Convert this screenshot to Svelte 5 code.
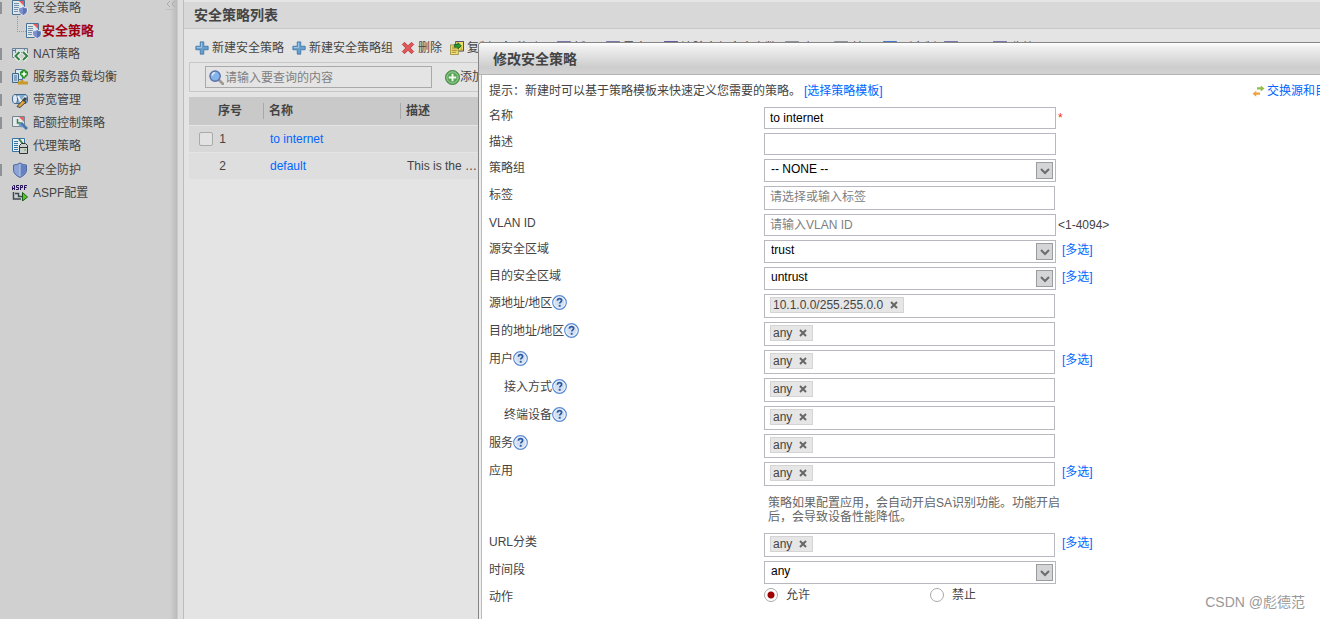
<script>
  let keyword = $state('')
  let action = $state('permit')

  const menu = [
    { name: 'NAT策略', icon: 'nat', marker: true },
    { name: '服务器负载均衡', icon: 'server', marker: true },
    { name: '带宽管理', icon: 'bandwidth', marker: true },
    { name: '配额控制策略', icon: 'quota', marker: true },
    { name: '代理策略', icon: 'proxy', tall: true },
    { name: '安全防护', icon: 'shield', marker: true },
    { name: 'ASPF配置', icon: 'aspf', tall: true }
  ]

  const tools = [
    { name: '新建安全策略', icon: 'plus' },
    { name: '新建安全策略组', icon: 'plus' },
    { name: '删除', icon: 'delete' },
    { name: '复制', icon: 'copy' },
    { name: '移动', icon: 'move', dropdown: true },
    { name: '插入', icon: 'window' },
    { name: '导出', icon: 'window', dropdown: true },
    { name: '清除全部命中次数', icon: 'clear' },
    { name: '启用', icon: 'page' },
    { name: '禁用', icon: 'page' },
    { name: '列定制', icon: 'columns' },
    { name: '展开', icon: 'window' },
    { name: '收缩', icon: 'window' }
  ]

  const policies = [
    { id: 1, name: 'to internet', desc: '', editable: true },
    { id: 2, name: 'default', desc: 'This is the …', editable: false }
  ]

  let fields = $state([
    { id: 'name', label: '名称', type: 'text', value: 'to internet', required: true },
    { id: 'desc', label: '描述', type: 'text', value: '' },
    { id: 'group', label: '策略组', type: 'select', value: '-- NONE --' },
    { id: 'label', label: '标签', type: 'picker', value: '', placeholder: '请选择或输入标签' },
    { id: 'vlan', label: 'VLAN ID', type: 'text', value: '', placeholder: '请输入VLAN ID', range: '<1-4094>' },
    { id: 'src-zone', label: '源安全区域', type: 'select', value: 'trust', multi: true },
    { id: 'dst-zone', label: '目的安全区域', type: 'select', value: 'untrust', multi: true },
    { id: 'src-addr', label: '源地址/地区', type: 'tags', tags: ['10.1.0.0/255.255.0.0'], help: true },
    { id: 'dst-addr', label: '目的地址/地区', type: 'tags', tags: ['any'], help: true },
    { id: 'user', label: '用户', type: 'tags', tags: ['any'], help: true, multi: true },
    { id: 'access', label: '接入方式', type: 'tags', tags: ['any'], help: true, sub: true },
    { id: 'device', label: '终端设备', type: 'tags', tags: ['any'], help: true, sub: true },
    { id: 'service', label: '服务', type: 'tags', tags: ['any'], help: true },
    {
      id: 'app', label: '应用', type: 'tags', tags: ['any'], multi: true,
      note: '策略如果配置应用，会自动开启SA识别功能。功能开启后，会导致设备性能降低。'
    },
    { id: 'url', label: 'URL分类', type: 'tags', tags: ['any'], multi: true },
    { id: 'time', label: '时间段', type: 'select', value: 'any' }
  ])

  const removeTag = (field, tag) => {
    field.tags = field.tags.filter(t => t !== tag)
  }
</script>

{#snippet icon(name)}
  <svg class="icon" viewBox="0 0 16 16" aria-hidden="true">
    {#if name === 'policy'}
      <path d="M.5.5h12v14H.5z" fill="#e2e8ea" stroke="#4a7294" />
      <path d="M2 3.500h5M2 5.500h5M2 7.500h5M2 9.500h4M2 11.500h4" stroke="#6f91ad" />
      <path d="M7 1h5v5z" fill="#ea5a5c" />
      <path d="M6.500 8q2.500 0 4.500-1.500 2 1.500 4.500 1.500v3q0 2.500-4.500 4.500-4.500-2-4.500-4.500z" fill="#7c90cb" stroke="#e1e6f1" />
      <path d="M11 7.500V15q3.500-1.500 3.500-4V8.500Q12.500 8.500 11 7.500z" fill="#5d74b4" />
    {:else if name === 'nat'}
      <path d="M.5 2.500h3v9h-3zM12.500 2.500h3v5h-3zM3.500 2.500h9v4h-9z" fill="#d3dfe6" stroke="#6b8193" />
      <path d="M2 4v1" stroke="#3a70a8" stroke-width="2" />
      <path d="M8 5.500L3.500 10 8 14.500M11 5.500l4 4.500-4 4.500" fill="none" stroke="#f0f5ed" stroke-width="4" />
      <path d="M7.500 6l-4 4 4 4M11 6l4 4-4 4" fill="none" stroke="#388044" stroke-width="2" />
    {:else if name === 'server'}
      <path d="M3.500.5h7v10h-7z" fill="#dce6ef" stroke="#4b7196" />
      <path d="M.5 4.500h6v9h-6z" fill="#c4d6e6" stroke="#3f688d" />
      <path d="M2 7h3M2 9h3M2 11h3" stroke="#4b7196" />
      <path d="M10 11v3M6 14h10" stroke="#c9992c" stroke-width="3" />
      <path d="M12 0l4 3v3l-4 4-4-4V3z" fill="#269323" />
      <path d="M12 2.500v5M9.500 5h5" stroke="#fff" stroke-width="1.500" />
    {:else if name === 'bandwidth'}
      <path d="M3 2.500h10q2.500 0 2.500 4.500T13 11.500H3z" fill="#84abcd" stroke="#3e678e" />
      <ellipse cx="3" cy="7" rx="2.500" ry="4.500" fill="#dfeaf2" stroke="#3e678e" />
      <path d="M6 4l3 6 5-6" fill="none" stroke="#eaf5fc" stroke-width="2" />
      <path d="M5 14.500L11 8l3 2-6 5.500z" fill="#e6a53a" stroke="#414449" />
      <path d="M11 9l3-3" stroke="#414449" stroke-width="3" />
    {:else if name === 'quota'}
      <path d="M.5 1.500h12v10H.5z" fill="#e6e9e7" stroke="#738591" />
      <path d="M7 2h5v5z" fill="#ef5f5f" />
      <path d="M5.500 4v4h4" fill="none" stroke="#328255" stroke-width="1.500" />
      <path d="M9 8l6 6" stroke="#4a78ad" stroke-width="3" />
      <path d="M7.500 8.500q0 3 3 3" fill="none" stroke="#709acb" stroke-width="2" />
    {:else if name === 'proxy'}
      <path d="M.5.5h12v13H.5z" fill="#e6eef4" stroke="#3973a4" />
      <path d="M2 3.500h4M2 5.500h4M2 7.500h4M2 9.500h4M2 11.500h4" stroke="#3973a4" />
      <path d="M7 1l4 5" stroke="#43803e" stroke-width="2" />
      <path d="M9.500 5.500h4l2 2v8h-8v-8z" fill="#c9ceca" stroke="#303537" />
      <path d="M8 9.500h7" stroke="#303537" />
      <path d="M12 12h2" stroke="#5caf50" />
    {:else if name === 'shield'}
      <path d="M1.500 3Q5 3 8 1q3 2 6.500 2v5q0 4.500-6.500 7.500Q1.500 12.500 1.500 8z" fill="#8ca3d8" stroke="#50699f" />
      <path d="M8 2v12.500Q14 12 14 8V3.500Q11 3 8 2z" fill="#6581c1" />
      <path d="M8 2v12" stroke="#c0ccec" />
    {:else if name === 'aspf'}
      <path d="M.5 5V1.500L1.500.5h1v4.500M.5 3.500h2M7 .5H4.500v2h2v2H4M8.500 5V.5h2v2h-2M12.500 5V.5H15M12.500 2.500h2" fill="none" stroke="#27105b" />
      <path d="M1.500 7v7H9M3 8.500h3.500v3H10" fill="none" stroke="#3b4a52" stroke-width="1.500" />
      <path d="M10.500 7.500l5 4.500-5 4z" fill="#53c920" stroke="#1c5c1a" />
    {:else if name === 'plus'}
      <path d="M6 1h4v5h5v4h-5v5H6v-5H1V6h5z" fill="#6a9ecb" stroke="#3f77a8" />
      <path d="M7.500 2v5.500H2" fill="none" stroke="#a6cbea" />
    {:else if name === 'delete'}
      <path d="M4 1.500l4 4 4-4L14.500 4l-4 4 4 4-2.500 2.500-4-4-4 4L1.500 12l4-4-4-4z" fill="#e1575a" stroke="#b73740" />
    {:else if name === 'copy'}
      <path d="M6.500.5h9v11h-9z" fill="#f0dc66" stroke="#35345c" />
      <path d="M.5 4.500h9v11h-9z" fill="#f5e27b" stroke="#968b3b" />
      <path d="M2 7h5M2 9h6M2 11h6M2 13h5M12 8h2M12 10h2" stroke="#a08a28" />
      <path d="M5 4h4V2l4 3.500L9 9V7H5z" fill="#2d9b36" stroke="#176021" />
    {:else if name === 'move'}
      <path d="M8 0l6 6h-3v9H5V6H2z" fill="#65a5dc" stroke="#3e75a8" />
    {:else if name === 'window'}
      <path d="M.5.5h15v13H.5z" fill="#e3e5f2" stroke="#625f99" />
      <path d="M2 4h12M4 7h8M4 10h8" stroke="#8a88b4" />
    {:else if name === 'clear'}
      <path d="M.5.5h15v13H.5z" fill="#6f6cad" stroke="#534e92" />
      <path d="M4 8h8" stroke="#fff" stroke-width="2" />
    {:else if name === 'page'}
      <path d="M.5.5h15v14H.5z" fill="#edf0f2" stroke="#778189" />
      <path d="M9 1h6v6z" fill="#ed5a60" />
    {:else if name === 'columns'}
      <path d="M.5.5h15v13H.5z" fill="#a8c5ef" stroke="#396fc1" />
      <path d="M1 1.500h14M5.500 2v11M10.500 2v11" stroke="#396fc1" stroke-width="2" />
    {:else if name === 'search'}
      <path d="M10 10l5 5" stroke="#a09a95" stroke-width="3" stroke-linecap="round" />
      <circle cx="6.500" cy="6.500" r="5.500" fill="#84b5ea" stroke="#586fa9" stroke-width="1.500" />
      <path d="M3.500 6q0-3 3-3" fill="none" stroke="#d8ebff" stroke-width="1.500" />
    {:else if name === 'add'}
      <circle cx="8" cy="8" r="7.500" fill="#5aa558" stroke="#3c833c" />
      <circle cx="8" cy="8" r="6" fill="none" stroke="#a3cf9f" />
      <path d="M8 4v8M4 8h8" stroke="#f3faf2" stroke-width="2" />
    {:else if name === 'swap'}
      <path d="M6 3h5V.5l5 4-5 4V6H6z" fill="#8fbf47" />
      <path d="M10 10H5V7.500l-5 4 5 4V13h5z" fill="#f0a23c" />
    {:else if name === 'help'}
      <circle cx="8" cy="8" r="7.200" fill="#d3e0f2" stroke="#5b8bd4" stroke-width="1.400" />
      <circle cx="8" cy="8" r="6" fill="none" stroke="#f5f8fc" />
      <path d="M5.800 6q0-2.200 2.300-2.200 2.200 0 2.200 1.900 0 1.300-1.200 1.900-.9.500-.9 1.500" fill="none" stroke="#2d5a9f" stroke-width="1.800" />
      <path d="M7.200 10.500h2v2h-2z" fill="#2d5a9f" />
    {/if}
  </svg>
{/snippet}

<div class="shell">
  <nav class="sidebar">
    <button class="collapse" aria-label="collapse">
      <svg viewBox="0 0 10 8"><path d="M4 0L1 3l3 3M9 0L6 3l3 3" fill="none" stroke="#aaa" /></svg>
    </button>
    <ul>
      <li class="marker"><a href="#policy">{@render icon('policy')}安全策略</a></li>
      <li class="child"><a href="#policy-list">{@render icon('policy')}安全策略</a></li>
      {#each menu as item (item.name)}
        <li class:marker={item.marker} class:tall={item.tall}>
          <a href="#{item.icon}">{@render icon(item.icon)}{item.name}</a>
        </li>
      {/each}
    </ul>
  </nav>

  <main>
    <h1>安全策略列表</h1>
    <div class="toolbar">
      {#each tools as tool}
        <button class:dropdown={tool.dropdown}>{@render icon(tool.icon)}{tool.name}</button>
      {/each}
    </div>
    <div class="filter">
      <div class="search">
        {@render icon('search')}
        <input type="text" aria-label="查询" placeholder="请输入要查询的内容" bind:value={keyword} />
      </div>
      <button>{@render icon('add')}添加查询项</button>
    </div>
    <table>
      <thead>
        <tr><th class="num">序号</th><th class="name"><span>名称</span></th><th><span>描述</span></th></tr>
      </thead>
      <tbody>
        {#each policies as policy (policy.id)}
          <tr>
            <td>
              <div class="num-cell">
                {#if policy.editable}<input type="checkbox" aria-label={policy.name} />{/if}
                {policy.id}
              </div>
            </td>
            <td><a href="#{policy.name}">{policy.name}</a></td>
            <td>{policy.desc}</td>
          </tr>
        {/each}
      </tbody>
    </table>
  </main>

  <section class="dialog" role="dialog" aria-labelledby="dialog-title">
    <h2 id="dialog-title">修改安全策略</h2>
    <div class="dialog-body">
      <div class="tip">
        <span>提示：新建时可以基于策略模板来快速定义您需要的策略。</span>
        <a href="#template">[选择策略模板]</a>
        <a class="swap" href="#swap">{@render icon('swap')}交换源和目的</a>
      </div>
      <form>
        {#each fields as field (field.id)}
          <div class="row">
            <div class="label" class:sub={field.sub}>
              <label for={field.id}>{field.label}</label>
              {#if field.help}
                <button type="button" class="help" aria-label="help">{@render icon('help')}</button>
              {/if}
            </div>
            <div class="control">
              {#if field.type === 'select'}
                <div class="select">
                  <select id={field.id} bind:value={field.value}>
                    <option>{field.value}</option>
                  </select>
                  <span class="arrow">
                    <svg viewBox="0 0 15 15"><path d="M4 6l4 4 4-4" fill="none" stroke="#6a6c70" stroke-width="2" /></svg>
                  </span>
                </div>
              {:else if field.type === 'tags'}
                <div class="tags">
                  {#each field.tags as tag (tag)}
                    <span class="tag">
                      {tag}
                      <button type="button" aria-label="remove {tag}" onclick={() => removeTag(field, tag)}>
                        <svg viewBox="0 0 8 8"><path d="M1 1l6 6M7 1L1 7" stroke="#666" stroke-width="2" /></svg>
                      </button>
                    </span>
                  {/each}
                  <input id={field.id} type="text" />
                </div>
              {:else}
                <input
                  id={field.id}
                  class={field.type}
                  type="text"
                  placeholder={field.placeholder}
                  bind:value={field.value}
                />
              {/if}
              {#if field.note}<p>{field.note}</p>{/if}
            </div>
            {#if field.required}<span class="star">*</span>{/if}
            {#if field.range}<span class="range">{field.range}</span>{/if}
            {#if field.multi}<a class="multi" href="#{field.id}">[多选]</a>{/if}
          </div>
        {/each}
        <div class="row">
          <div class="label">动作</div>
          <div class="radios">
            <label><input type="radio" name="action" value="permit" bind:group={action} />允许</label>
            <label><input type="radio" name="action" value="deny" bind:group={action} />禁止</label>
          </div>
        </div>
      </form>
    </div>
  </section>

  <div class="watermark">CSDN @彪德范</div>
</div>

<style>
  :global(body) {
    color: #444;
    font: 12px/16px "Liberation Sans", "Noto Sans CJK SC", sans-serif;
  }

  .shell {
    position: relative;
    display: flex;
    height: 100vh;
    overflow: hidden;
    background: #e4e4e4;
  }

  * {
    box-sizing: border-box;
  }

  a {
    color: #0066ff;
    text-decoration: none;
  }

  button {
    display: flex;
    align-items: center;
    padding: 0;
    border: none;
    background: none;
    color: inherit;
    font: inherit;
    white-space: nowrap;
    cursor: pointer;
  }

  input,
  select {
    margin: 0;
    font: inherit;
    outline: none;
  }

  .icon {
    flex: none;
    width: 14px;
    height: 14px;
  }

  /* sidebar */
  .sidebar {
    position: relative;
    flex: 0 0 184px;
    border-right: 1px solid #bdbdbd;
    background: linear-gradient(to right, #d0d0d0 170px, #bababa 177px, #dedede 178px);
  }

  .sidebar ul {
    margin: -4px 0 0;
    padding: 0;
    list-style: none;
  }

  .sidebar li {
    display: flex;
    align-items: center;
    height: 23px;
    padding-left: 12px;
  }

  .sidebar li.marker {
    padding-left: 0;
  }

  .sidebar li.marker::before {
    content: '';
    width: 2px;
    height: 12px;
    margin-right: 10px;
    background: #8e9195;
  }

  .sidebar li.tall {
    height: 24px;
  }

  .sidebar .icon {
    width: 16px;
    height: 16px;
  }

  .sidebar a {
    display: flex;
    align-items: center;
    gap: 5px;
    color: #444;
  }

  .sidebar li.child {
    padding-left: 17px;
  }

  .sidebar li.child::before {
    content: '';
    width: 8px;
    height: 15px;
    margin-top: -14px;
    border-left: 1px dotted #999;
    border-bottom: 1px dotted #999;
  }

  .sidebar .child a {
    gap: 0;
    color: #a00010;
    font-size: 13px;
    font-weight: bold;
  }

  .collapse {
    position: absolute;
    top: 0;
    right: 7px;
    width: 10px;
    height: 10px;
    border-bottom: 1px solid #c0c0c0;
  }

  /* policy list */
  main {
    flex: 1;
    min-width: 0;
    padding-top: 2px;
  }

  h1,
  h2 {
    margin: 0;
    color: #444;
    font-size: 14px;
    line-height: 26px;
  }

  h1 {
    padding-left: 10px;
    border-bottom: 1px solid #c8c8c8;
    background: #d8d8d8;
  }

  .toolbar {
    display: flex;
    gap: 8px;
    padding: 11px 11px 6px;
    overflow: hidden;
  }

  .toolbar button {
    gap: 3px;
  }

  .toolbar .dropdown {
    padding-right: 9px;
  }

  .filter {
    display: flex;
    align-items: center;
    gap: 13px;
    height: 30px;
    margin-left: 5px;
    padding-left: 15px;
    border: 1px solid #c8c8c8;
  }

  .filter button {
    gap: 0;
    line-height: 18px;
  }

  .search {
    display: flex;
    align-items: center;
    gap: 1px;
    width: 227px;
    height: 22px;
    padding: 0 3px;
    border: 1px solid #a9a9a9;
  }

  .search input {
    flex: 1;
    min-width: 0;
    padding: 2px 0 0;
    border: none;
    background: none;
  }

  .filter .icon {
    width: 15px;
    height: 15px;
  }

  ::placeholder {
    color: #808080;
    opacity: 1;
  }

  table {
    width: calc(100% - 5px);
    margin: 5px 0 0 5px;
    border-collapse: collapse;
    table-layout: fixed;
  }

  th {
    height: 28px;
    padding: 0;
    background: #c9c9c9;
    text-align: left;
  }

  th.num {
    width: 74px;
    padding-left: 29px;
  }

  th.name {
    width: 137px;
  }

  th span {
    display: block;
    padding-left: 5px;
    border-left: 1px solid #a8a8a8;
  }

  td {
    height: 27px;
    padding: 1px 0 0 7px;
    border-top: 1px solid #e4e4e4;
    background: #d8d8d8;
  }

  tr:nth-child(2) td {
    background: #dedede;
  }

  td:first-child {
    padding-left: 10px;
  }

  .num-cell {
    display: flex;
    align-items: center;
    justify-content: flex-end;
    gap: 6px;
    width: 27px;
  }

  input[type='checkbox'] {
    appearance: none;
    flex: none;
    width: 14px;
    height: 14px;
    border: 1px solid #aaa;
    border-radius: 2px;
    background: #e2e2e2;
  }

  /* edit dialog */
  .dialog {
    position: absolute;
    top: 42px;
    right: 0;
    bottom: 0;
    left: 478px;
    border: solid #858585;
    border-width: 1px 0 0 1px;
    border-radius: 4px 0 0 0;
    background: #eee;
    overflow: hidden;
  }

  h2 {
    padding: 4px 0 2px 14px;
    border-bottom: 1px solid #b4b4b4;
    background: linear-gradient(#fff, #f0f0f0 4px, #cdcdcd 24px, #d3d3d3);
    line-height: 25px;
  }

  .dialog-body {
    height: 100%;
    margin-left: 2px;
    padding: 8px 0 0 7px;
    border-left: 1px solid #bbb;
    background: #fff;
  }

  .tip {
    display: flex;
    gap: 3px;
    margin-bottom: 8px;
    white-space: nowrap;
  }

  .tip .swap {
    display: flex;
    flex: 0 0 68px;
    align-items: center;
    gap: 2px;
    margin-left: auto;
    overflow: hidden;
  }

  .swap .icon {
    width: 13px;
    height: 12px;
  }

  .row {
    display: grid;
    grid-template-columns: 275px 292px auto;
    margin-bottom: 4px;
  }

  .label {
    display: flex;
    height: 17px;
    line-height: 18px;
  }

  .label.sub {
    padding-left: 15px;
  }

  .control input,
  .control select,
  .tags {
    display: block;
    width: 292px;
    height: 22px;
    padding: 0 5px;
    border: 1px solid #b8b8c0;
    border-radius: 0;
    background: #fff;
    color: #000;
  }

  .control .picker {
    width: 291px;
    height: 24px;
    padding-bottom: 3px;
  }

  .select {
    position: relative;
  }

  .control select {
    appearance: none;
    height: 23px;
    padding: 0 20px 4px 6px;
  }

  .arrow {
    position: absolute;
    top: 3px;
    right: 3px;
    width: 17px;
    height: 17px;
    border: 1px solid #9a9ca0;
    background: #d3d5d7;
    pointer-events: none;
  }

  .arrow svg {
    display: block;
  }

  .tags {
    display: flex;
    gap: 4px;
    width: 291px;
    height: 24px;
    padding-top: 2px;
  }

  .tags input {
    flex: 1;
    width: 0;
    height: 16px;
    padding: 0;
    border: none;
  }

  .tag {
    display: flex;
    align-items: center;
    gap: 7px;
    height: 16px;
    padding: 0 5px 0 2px;
    border: 1px solid #d4d4d4;
    background: #e6e6e6;
    color: #444;
  }

  .tag svg {
    width: 8px;
    height: 8px;
  }

  .help .icon {
    width: 15px;
    height: 15px;
  }

  p {
    margin: 4px 0 0;
    padding: 6px 0 5px 4px;
    width: 300px;
    color: #666;
    line-height: 14px;
  }

  .star,
  .range {
    padding-left: 2px;
    line-height: 22px;
  }

  .star {
    color: #f03020;
  }

  .multi {
    padding-left: 6px;
    line-height: 20px;
  }

  .radios {
    display: flex;
    grid-column: 2 / 4;
  }

  .radios label {
    display: flex;
    align-items: center;
    gap: 8px;
    width: 166px;
    height: 14px;
    line-height: 18px;
  }

  input[type='radio'] {
    appearance: none;
    width: 14px;
    height: 14px;
    border: 1px solid #aaa;
    border-radius: 50%;
    background: #fff;
  }

  input[type='radio']:checked {
    background: radial-gradient(circle, #a00000 3px, #fff 4px);
  }

  .watermark {
    position: absolute;
    right: 15px;
    bottom: 7px;
    color: #999;
    font-size: 14px;
    line-height: 20px;
  }
</style>
